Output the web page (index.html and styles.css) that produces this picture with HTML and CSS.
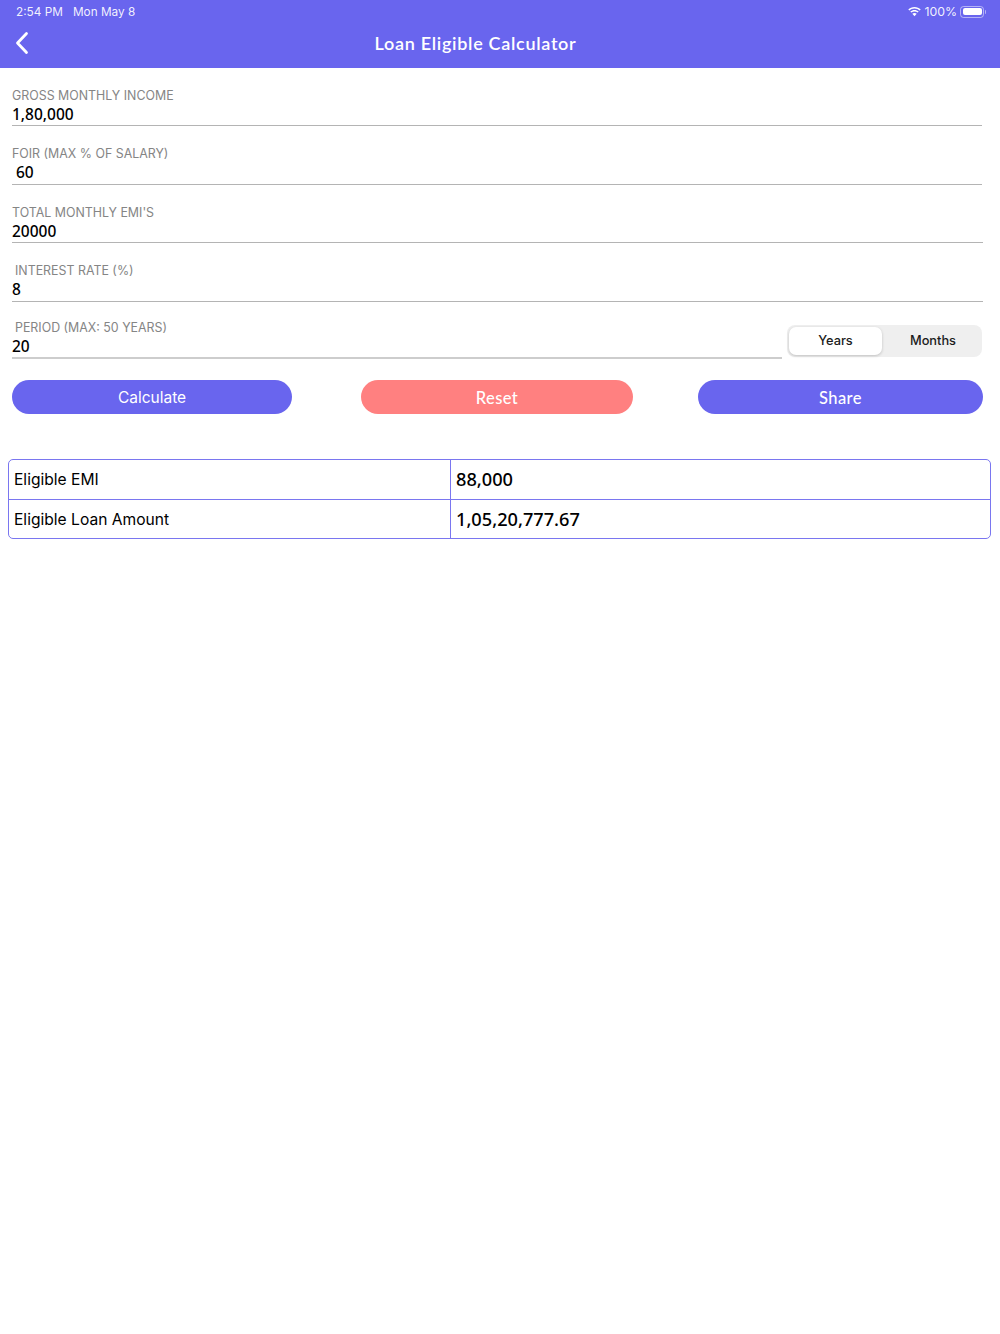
FILE: index.html
```html
<!DOCTYPE html>
<html lang="en">
<head>
  <meta charset="UTF-8">
  <meta name="viewport" content="width=device-width, initial-scale=1.0">
  <title>Loan Eligible Calculator</title>
  <link rel="stylesheet" href="styles.css">
</head>
<body>
  <header class="top">
    <div class="status">
      <span class="status-time">2:54 PM</span>
      <span class="status-date">Mon May 8</span>
      <span class="status-right">
        <svg class="wifi" width="15" height="11" viewBox="0 0 15 11">
          <path d="M7.5 2.6c2 0 3.8.8 5.2 2l1-1.100C12.300 2.100 10 1 7.500 1S2.700 2.100 1.300 3.500l1 1.100c1.400-1.200 3.200-2 5.200-2z" fill="#fff"/>
          <path d="M7.500 5.400c1.200 0 2.300.4 3.200 1.200l1-1.100C10.500 4.500 9.100 3.900 7.500 3.900s-3 .6-4.200 1.600l1 1.100c.9-.8 2-1.200 3.200-1.200z" fill="#fff"/>
          <path d="M7.500 6.900c-.9 0-1.600.3-2.200.8l2.200 2.500 2.200-2.500c-.6-.5-1.300-.8-2.200-.8z" fill="#fff"/>
        </svg>
        <span>100%</span>
        <span class="battery"><span class="battery-fill"></span></span>
      </span>
    </div>
    <div class="nav">
      <svg class="back" width="14" height="24" viewBox="0 0 14 24">
        <path d="M11.500 2.500 2.500 12l9 9.500" fill="none" stroke="#fff" stroke-width="2.800" stroke-linecap="round" stroke-linejoin="round"/>
      </svg>
      <h1 class="title">Loan Eligible Calculator</h1>
    </div>
  </header>

  <main class="form">
    <div class="field">
      <div class="field-label">GROSS MONTHLY INCOME</div>
      <div class="field-value">1,80,000</div>
    </div>
    <div class="field">
      <div class="field-label">FOIR (MAX % OF SALARY)</div>
      <div class="field-value value-indent">60</div>
    </div>
    <div class="field field-wide">
      <div class="field-label">TOTAL MONTHLY EMI'S</div>
      <div class="field-value">20000</div>
    </div>
    <div class="field field-wide">
      <div class="field-label label-indent">INTEREST RATE (%)</div>
      <div class="field-value">8</div>
    </div>

    <div class="period-row">
      <div class="field field-period">
        <div class="field-label label-indent">PERIOD (MAX: 50 YEARS)</div>
        <div class="field-value">20</div>
      </div>
      <div class="segment">
        <div class="segment-item segment-active">Years</div>
        <div class="segment-item segment-off">Months</div>
      </div>
    </div>

    <div class="buttons">
      <div class="btn btn-calc">Calculate</div>
      <div class="btn btn-reset">Reset</div>
      <div class="btn btn-share">Share</div>
    </div>

    <div class="result">
      <div class="result-row">
        <div class="result-name">Eligible EMI</div>
        <div class="result-value">88,000</div>
      </div>
      <div class="result-row">
        <div class="result-name">Eligible Loan Amount</div>
        <div class="result-value">1,05,20,777.67</div>
      </div>
    </div>
  </main>
</body>
</html>
```

FILE: styles.css
```css
html {
  box-sizing: border-box;
}
*, *:before, *:after {
  box-sizing: inherit;
}
body {
  margin: 0;
  padding: 0;
  background: #fff;
  color: #000;
  font-family: "Inter", "Liberation Sans", sans-serif;
}

.top {
  height: 67.500px;
  background: #6965ee;
  color: #fff;
}

.status {
  display: flex;
  align-items: center;
  height: 23px;
  padding: 0 15px 0 16px;
  font-size: 11.800px;
  color: rgba(255, 255, 255, 0.92);
}
.status-date {
  margin-left: 10px;
}
.status-right {
  margin-left: auto;
  display: flex;
  align-items: center;
  font-size: 12.300px;
}
.wifi {
  margin-right: 2px;
}
.battery {
  display: block;
  position: relative;
  width: 24px;
  height: 12px;
  margin-left: 3px;
  margin-right: 1px;
  padding: 1.500px;
  border: 1px solid rgba(255, 255, 255, 0.5);
  border-radius: 3.500px;
}
.battery:after {
  content: "";
  position: absolute;
  right: -3px;
  top: 3px;
  width: 1.500px;
  height: 4px;
  background: rgba(255, 255, 255, 0.5);
  border-radius: 0 1px 1px 0;
}
.battery-fill {
  display: block;
  height: 100%;
  background: #fff;
  border-radius: 2px;
}

.nav {
  position: relative;
  display: flex;
  align-items: center;
  justify-content: center;
  height: 40px;
  padding-right: 49px;
}
.back {
  position: absolute;
  left: 15px;
  top: 8px;
}
.title {
  margin: 0;
  font-family: "Lato", sans-serif;
  font-size: 18px;
  font-weight: 600;
  letter-spacing: 0.7px;
}

.form {
  padding: 19px 0 0 12px;
}

.field {
  width: 970px;
  height: 58.500px;
}
.field-wide {
  width: 971px;
}
.field-label {
  height: 17px;
  line-height: 17px;
  font-size: 12.400px;
  color: #858585;
}
.label-indent {
  padding-left: 3px;
}
.field-value {
  height: 21.500px;
  line-height: 21px;
  font-family: "Noto Sans", sans-serif;
  font-size: 15.500px;
  font-weight: 500;
  border-bottom: 1px solid #b4b4b4;
  box-sizing: content-box;
}
.value-indent {
  padding-left: 4px;
}

.period-row {
  display: flex;
  align-items: flex-start;
  height: 61.500px;
  margin-top: -2px;
}
.field-period {
  width: 770px;
  height: auto;
}
.field-period .field-value {
  height: 21px;
  border-bottom: 2px solid #cdcdcd;
}
.segment {
  display: flex;
  width: 195px;
  height: 32px;
  margin: 6px 0 0 5px;
  padding: 2px;
  background: #efefef;
  border-radius: 8px;
}
.segment-item {
  flex: 1;
  text-align: center;
  line-height: 28px;
  font-size: 12.800px;
  font-weight: 500;
  color: #1c1c1c;
}
.segment-active {
  flex: 0 0 93px;
  background: #fff;
  border-radius: 7px;
  box-shadow: 0 1px 3px rgba(0, 0, 0, 0.2);
}
.segment-off {
  padding-left: 4px;
}

.buttons {
  display: flex;
  height: 34px;
}
.btn {
  height: 34px;
  line-height: 34px;
  border-radius: 17px;
  text-align: center;
  color: #fff;
  font-size: 16.500px;
  font-family: "Lato", sans-serif;
  font-weight: 500;
  letter-spacing: 0.4px;
  background: #6965ee;
}
.btn-calc {
  width: 280px;
  padding-top: 0.500px;
  font-family: "Inter", sans-serif;
  font-weight: 400;
  font-size: 15.500px;
  letter-spacing: 0;
}
.btn-reset {
  width: 272px;
  margin-left: 69px;
  padding-top: 1px;
  background: #ff8080;
}
.btn-share {
  width: 285px;
  margin-left: 65px;
  padding-top: 1px;
}

.result {
  width: 983px;
  margin: 44.500px 0 0 -4px;
  border: 1px solid #7a76f0;
  border-radius: 5px;
}
.result-row {
  display: flex;
  height: 39px;
}
.result-row + .result-row {
  border-top: 1px solid #7a76f0;
}
.result-name {
  width: 442px;
  padding-left: 5px;
  line-height: 39px;
  font-size: 15.600px;
  border-right: 1px solid #7a76f0;
}
.result-value {
  flex: 1;
  padding-left: 5px;
  line-height: 39px;
  font-family: "Noto Sans", sans-serif;
  font-size: 18.200px;
  font-weight: 500;
}
```
